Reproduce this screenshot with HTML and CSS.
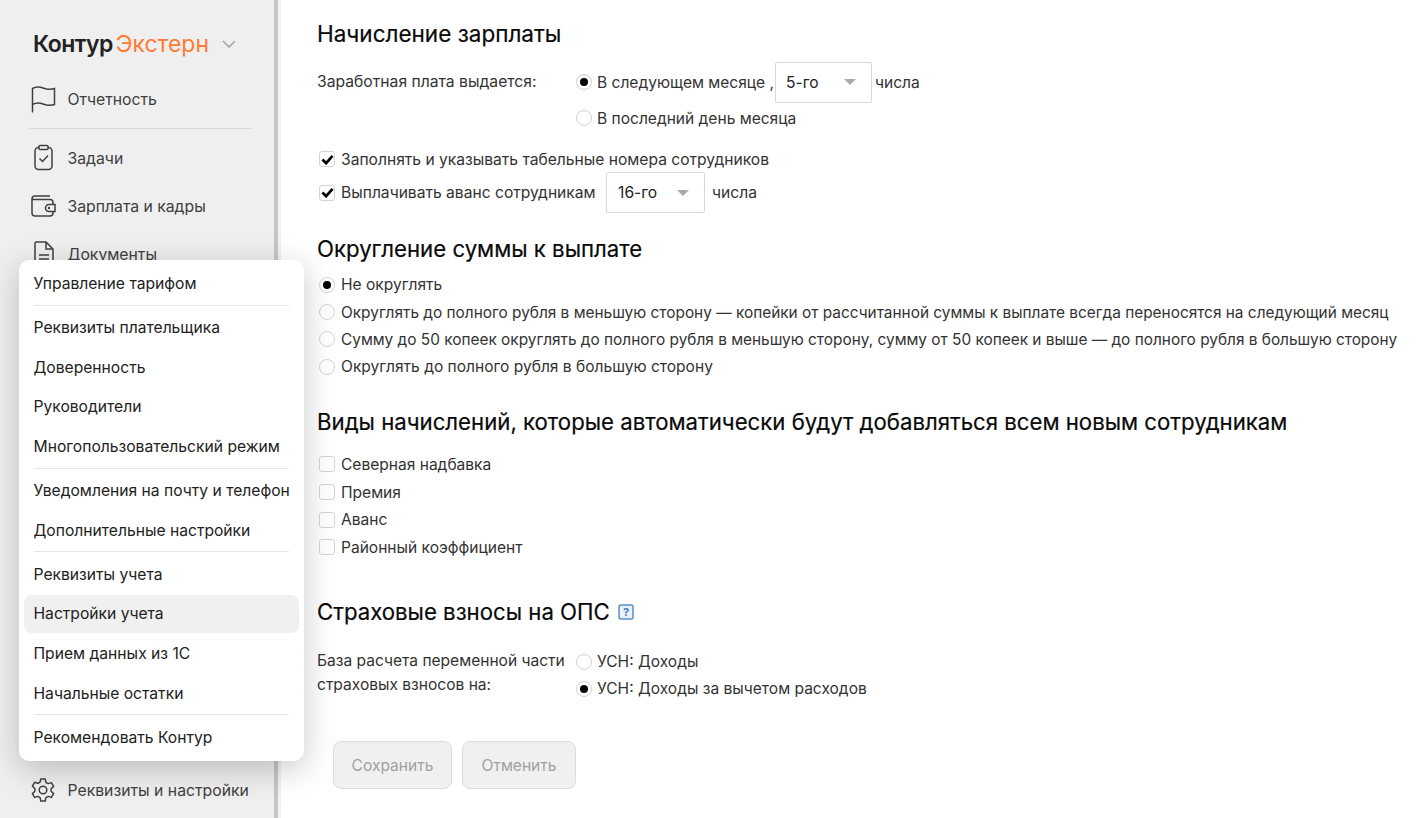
FILE: index.html
```html
<!DOCTYPE html>
<html lang="ru">
<head>
<meta charset="utf-8">
<title>Настройки учета</title>
<link rel="stylesheet" href="styles.css">
</head>
<body>
<div class="app">
  <aside class="sidebar">
    <div class="logo"><span class="logo-k">Контур</span><span class="logo-e">Экстерн</span>
      <svg class="logo-caret" width="16" height="10" viewBox="0 0 16 10"><path d="M2 2l6 6 6-6" fill="none" stroke="#a6a6a6" stroke-width="1.6"/></svg>
    </div>
    <nav class="nav">
      <a class="nav-item nav-first">
        <svg class="nav-icon" width="26" height="28" viewBox="0 0 26 28"><path d="M2.500 27.500V3.500C6 1.500 9 1.500 13 3c4 1.500 7 2 11.500.5v16c-4.500 1.500-7.500 1-11.500-.5-4-1.500-7-1.500-10.500.5" fill="none" stroke="#404040" stroke-width="1.500"/></svg>
        <span>Отчетность</span></a>
      <div class="nav-sep"></div>
      <a class="nav-item">
        <svg class="nav-icon" width="26" height="28" viewBox="0 0 26 28"><rect x="5" y="3.500" width="17" height="22" rx="3.500" fill="none" stroke="#404040" stroke-width="1.500"/><rect x="9" y="1.500" width="9" height="4" rx="1" fill="#efefef" stroke="#404040" stroke-width="1.500"/><path d="M9.500 14.500l3 3 5.500-6" fill="none" stroke="#404040" stroke-width="1.500"/></svg>
        <span>Задачи</span></a>
      <a class="nav-item">
        <svg class="nav-icon" width="26" height="28" viewBox="0 0 26 28"><path d="M20 4H5a3 3 0 0 0-3 3v14a3 3 0 0 0 3 3h15a3 3 0 0 0 3-3v-1M2 7.500h18a3 3 0 0 1 3 3V12" fill="none" stroke="#404040" stroke-width="1.500"/><path d="M25 12.500h-6a3.500 3.500 0 0 0 0 7h6z" fill="none" stroke="#404040" stroke-width="1.500"/><circle cx="19" cy="16" r="1.200" fill="#404040"/></svg>
        <span>Зарплата и кадры</span></a>
      <a class="nav-item">
        <svg class="nav-icon" width="26" height="28" viewBox="0 0 26 28"><path d="M6 2h10l7 7v15a2 2 0 0 1-2 2H7a2 2 0 0 1-2-2V3zM16 2v7h7M9 15h10M9 19h10" fill="none" stroke="#404040" stroke-width="1.500"/></svg>
        <span>Документы</span></a>
    </nav>
    <a class="nav-item nav-bottom">
      <svg class="nav-icon" width="26" height="28" viewBox="0 0 26 28"><path d="M10.800 3h4.400l.7 3.300 2.300 1.300 3.200-1 2.200 3.800-2.500 2.300v2.600l2.500 2.300-2.200 3.800-3.200-1-2.300 1.300-.7 3.300h-4.400l-.7-3.300-2.300-1.300-3.200 1-2.200-3.800 2.500-2.300v-2.600L2.400 10.100l2.200-3.800 3.200 1 2.300-1.300z" fill="none" stroke="#404040" stroke-width="1.500" stroke-linejoin="round"/><circle cx="13" cy="14" r="3.800" fill="none" stroke="#404040" stroke-width="1.500"/></svg>
      <span>Реквизиты и настройки</span></a>
  </aside>

  <main class="content">
    <h2 class="h h-1">Начисление зарплаты</h2>
    <div class="pay-row">
      <div class="pay-label">Заработная плата выдается:</div>
      <div class="pay-opts">
        <div class="opt opt-sel"><span class="radio on"></span><span class="opt-text">В следующем месяце ,</span><span class="select s5">5-го<i class="arrow"></i></span><span>числа</span></div>
        <div class="opt"><span class="radio"></span><span class="opt-text">В последний день месяца</span></div>
      </div>
    </div>
    <div class="check-line c1"><span class="check on"><svg width="13" height="11" viewBox="0 0 14 12"><path d="M1.500 6l4 4 7-8" fill="none" stroke="#000" stroke-width="3"/></svg></span><span>Заполнять и указывать табельные номера сотрудников</span></div>
    <div class="check-line c2"><span class="check on"><svg width="13" height="11" viewBox="0 0 14 12"><path d="M1.500 6l4 4 7-8" fill="none" stroke="#000" stroke-width="3"/></svg></span><span>Выплачивать аванс сотрудникам</span><span class="select s16">16-го<i class="arrow"></i></span><span>числа</span></div>

    <h2 class="h h-2">Округление суммы к выплате</h2>
    <div class="list">
      <div class="line"><span class="radio on"></span><span>Не округлять</span></div>
      <div class="line long"><span class="radio"></span><span>Округлять до полного рубля в меньшую сторону — копейки от рассчитанной суммы к выплате всегда переносятся на следующий месяц</span></div>
      <div class="line long"><span class="radio"></span><span>Сумму до 50 копеек округлять до полного рубля в меньшую сторону, сумму от 50 копеек и выше — до полного рубля в большую сторону</span></div>
      <div class="line"><span class="radio"></span><span>Округлять до полного рубля в большую сторону</span></div>
    </div>

    <h2 class="h h-3">Виды начислений, которые автоматически будут добавляться всем новым сотрудникам</h2>
    <div class="list list-3">
      <div class="line"><span class="check"></span><span>Северная надбавка</span></div>
      <div class="line"><span class="check"></span><span>Премия</span></div>
      <div class="line"><span class="check"></span><span>Аванс</span></div>
      <div class="line"><span class="check"></span><span>Районный коэффициент</span></div>
    </div>

    <h2 class="h h-4">Страховые взносы на ОПС
      <svg class="help" width="16" height="16" viewBox="0 0 16 16"><rect x="1" y="1" width="14" height="14" rx="2" fill="#eaf2fb" stroke="#5a8fd0" stroke-width="1.500"/><text x="8" y="12" text-anchor="middle" class="help-q">?</text></svg>
    </h2>
    <div class="base-row">
      <div class="base-label">База расчета переменной части страховых взносов на:</div>
      <div class="base-opts">
        <div class="opt2"><span class="radio"></span><span>УСН: Доходы</span></div>
        <div class="opt2"><span class="radio on"></span><span>УСН: Доходы за вычетом расходов</span></div>
      </div>
    </div>
    <div class="buttons"><button class="btn btn-save">Сохранить</button><button class="btn btn-cancel">Отменить</button></div>
  </main>
</div>

<div class="menu">
  <div class="mi">Управление тарифом</div>
  <div class="msep"></div>
  <div class="mi">Реквизиты плательщика</div>
  <div class="mi">Доверенность</div>
  <div class="mi">Руководители</div>
  <div class="mi">Многопользовательский режим</div>
  <div class="msep"></div>
  <div class="mi">Уведомления на почту и телефон</div>
  <div class="mi">Дополнительные настройки</div>
  <div class="msep"></div>
  <div class="mi">Реквизиты учета</div>
  <div class="mi mi-active">Настройки учета</div>
  <div class="mi">Прием данных из 1С</div>
  <div class="mi">Начальные остатки</div>
  <div class="msep"></div>
  <div class="mi">Рекомендовать Контур</div>
</div>
</body>
</html>
```
FILE: styles.css
```css
* { box-sizing: border-box; }
html, body { margin: 0; height: 100%; overflow: hidden; }
body { font-family: Inter, "Liberation Sans", sans-serif; font-size: 15.55px; color: #333; background: #fff; }
.app { display: flex; height: 818px; }
.sidebar { flex: none; width: 281px; display: flex; flex-direction: column; padding: 31px 0 0 0; background: linear-gradient(to right, #efefef 0 274px, #c6c6c6 274px 278px, #f2f2f2 278px 281px); }
.logo { display: flex; align-items: center; height: 26px; padding-left: 33px; font-size: 23px; }
.logo-k { color: #222; font-weight: 600; letter-spacing: -0.55px; }
.logo-e { color: #fe7a35; margin-left: 3px; font-weight: 400; }
.logo-caret { margin-left: 12px; }
.nav { margin-top: 24px; display: flex; flex-direction: column; }
.nav-item { display: flex; align-items: center; height: 48px; padding-left: 30px; gap: 11.5px; color: #404040; white-space: nowrap; font-size: 15.75px; }
.nav-icon { flex: none; }
.nav-first { height: 36px; }
.nav-sep { height: 1px; background: #d9d9d9; margin: 11px 29px 5px; width: 223px; }
.nav-bottom { margin-top: auto; height: 56px; }
.content { flex: 1; padding: 20px 0 0 36px; min-width: 0; }
.h { font-size: 22.2px; font-weight: 400; color: #0a0a0a; margin: 0; line-height: 28px; white-space: nowrap; -webkit-text-stroke: 0.2px #0a0a0a; }
.h-1 { font-size: 22.5px; }
.pay-row { display: flex; margin-top: 14px; }
.pay-label { width: 259px; line-height: 40px; font-size: 15.7px; }
.pay-opts { display: flex; flex-direction: column; }
.opt { display: flex; align-items: center; gap: 5px; }
.opt-sel { height: 40px; }
.opt:not(.opt-sel) { margin-top: 6px; height: 20px; }
.opt-sel .opt-text { margin-right: -4px; }
.radio { width: 16px; height: 16px; border-radius: 50%; border: 1px solid #d4d4d4; background: #fff; flex: none; display: inline-flex; align-items: center; justify-content: center; }
.radio.on::after { content: ""; width: 8px; height: 8px; border-radius: 50%; background: #000; }
.check { width: 16px; height: 16px; border-radius: 3px; border: 1px solid #d4d4d4; background: #fff; flex: none; display: inline-flex; align-items: center; justify-content: center; }
.select { display: inline-flex; align-items: center; justify-content: space-between; height: 41px; border: 1px solid #d9d9d9; border-radius: 2px; padding: 0 15px 0 10px; color: #222; }
.s5 { width: 97px; margin-right: -2px; }
.s16 { width: 99px; margin: 0 1px 0 4.5px; padding: 0 15px 0 11px; }
.arrow { width: 0; height: 0; border: 6px solid transparent; border-top-color: #aaa; border-bottom: 0; }
.check-line { display: flex; align-items: center; gap: 6px; margin-left: 2px; font-size: 15.62px; }
.c1 { margin-top: 21px; height: 20px; }
.c2 { margin-top: 3px; height: 41px; }
.h-2 { margin-top: 22px; }
.list { margin-top: 8px; display: flex; flex-direction: column; }
.line { display: flex; align-items: center; gap: 6px; height: 27.4px; margin-left: 2px; white-space: nowrap; }
.long { font-size: 15.4px; }
.h-3 { margin-top: 27.5px; }
.list-3 { margin-top: 14.5px; }
.list-3 .line { height: 27.7px; }
.h-4 { margin-top: 37px; display: flex; align-items: center; gap: 8px; }
.help-q { font-size: 11px; font-weight: 700; fill: #3f7cc8; }
.base-row { display: flex; margin-top: 22px; }
.base-label { width: 259px; line-height: 24px; padding-top: 1px; }
.base-opts { display: flex; flex-direction: column; }
.opt2 { display: flex; align-items: center; gap: 5px; height: 27px; }
.buttons { display: flex; gap: 10px; margin: 39px 0 0 16px; }
.btn { height: 48px; border: 1px solid #dcdcdc; border-radius: 8px; background: #f0f0f0; color: #a0a0a0; font: inherit; padding: 0; }
.btn-save { width: 119px; }
.btn-cancel { width: 114px; }
.menu { position: absolute; left: 19px; top: 260px; width: 285px; height: 501px; background: #fff; border-radius: 10px; box-shadow: 0 8px 32px rgba(0,0,0,.22); padding: 5px 5px; color: #222; font-size: 15.65px; }
.mi { height: 38px; line-height: 38px; margin-bottom: 1.65px; padding-left: 9.5px; border-radius: 8px; white-space: nowrap; }
.mi-active { background: #f0f0f0; }
.msep { height: 1px; background: #e6e6e6; margin: 0.5px 10px 3.4px; }
```
